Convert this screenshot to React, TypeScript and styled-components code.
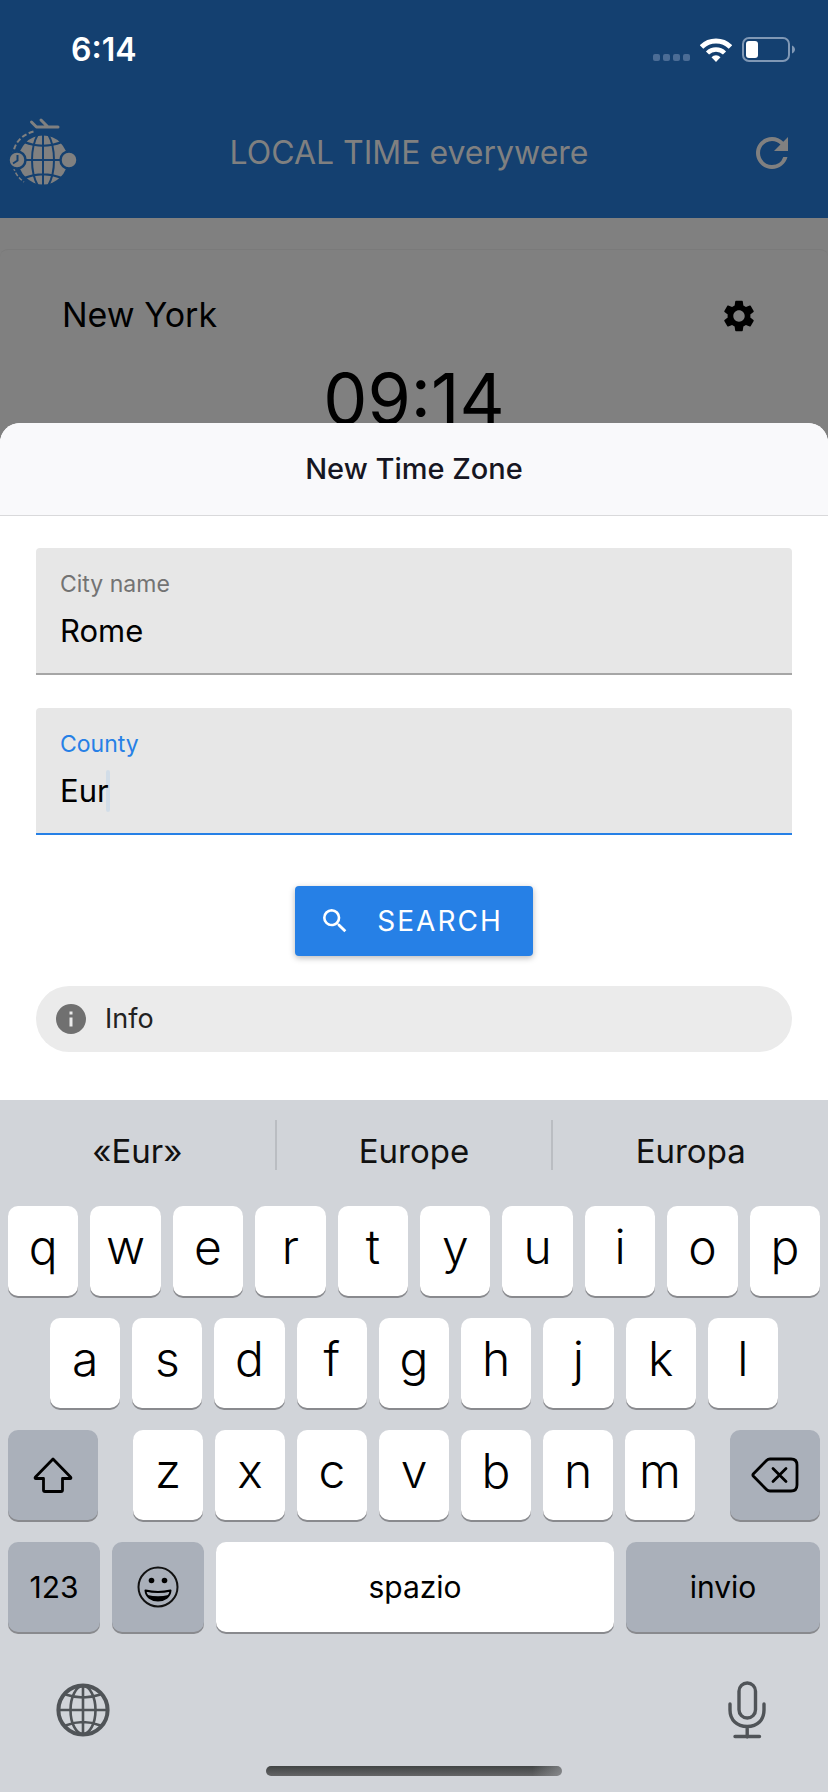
import React, { useState } from "react";
import styled, { createGlobalStyle } from "styled-components";
import { MdInfo, MdRefresh, MdSearch, MdSettings } from "react-icons/md";

const GlobalStyle = createGlobalStyle`
  *, *::before, *::after { box-sizing: border-box; }
  body {
    margin: 0;
    background: #d1d4d9;
    font-family: Inter, "Liberation Sans", sans-serif;
    color: #000;
  }
  button, input { font: inherit; color: inherit; }
  svg { display: block; flex: none; }
`;

const Screen = styled.div`
  min-height: 100vh;
  display: flex;
  flex-direction: column;
`;

const DimmedPage = styled.div`
  background: #808080;
`;

const Header = styled.header`
  background: #144070;
`;

const StatusBar = styled.div`
  height: 88px;
  padding: 12px 33px 0 71px;
  display: flex;
  align-items: center;
  justify-content: space-between;
  color: #fff;
`;

const Clock = styled.span`
  font-size: 32px;
  line-height: 40px;
  font-weight: 600;
`;

const StatusIcons = styled.div`
  display: flex;
  align-items: center;
  gap: 10px;
`;

const Toolbar = styled.div`
  height: 130px;
  padding: 0 32px 0 8px;
  display: flex;
  align-items: center;
  color: #808080;
`;

const AppTitle = styled.h1`
  flex: 1;
  margin: 0 8px 0 0;
  text-align: center;
  font-size: 32px;
  line-height: 40px;
  font-weight: 400;
`;

const IconButton = styled.button`
  display: grid;
  place-items: center;
  padding: 0;
  border: 0;
  background: none;
`;

const CityCard = styled.section`
  margin-top: 31px;
  padding: 45px 70px 0 62px;
  border-top: 1px solid #7a7a7a;
  border-radius: 8px 8px 0 0;
`;

const CityRow = styled.div`
  display: flex;
  align-items: flex-end;
  justify-content: space-between;
`;

const CityName = styled.h2`
  margin: 0;
  font-size: 34px;
  line-height: 40px;
  font-weight: 400;
`;

const CityTime = styled.p`
  margin: 24px 0 0 8px;
  text-align: center;
  font-size: 70px;
  line-height: 80px;
`;

const Sheet = styled.main`
  flex: 1;
  margin-top: -16px;
  border-radius: 20px 20px 0 0;
  background: #fff;
  overflow: hidden;
  position: relative;
`;

const SheetHeader = styled.div`
  padding: 26px 0;
  border-bottom: 1px solid #d9d9db;
  background: #f9f9fb;
`;

const SheetTitle = styled.h2`
  margin: 0;
  text-align: center;
  font-size: 29px;
  line-height: 40px;
  font-weight: 500;
  color: #161622;
`;

const Form = styled.form`
  padding: 32px 36px 48px;
  display: flex;
  flex-direction: column;
`;

const Field = styled.div<{ $active?: boolean }>`
  position: relative;
  margin-bottom: 33px;
  padding: 20px 24px 23px;
  border-bottom: 2px solid ${(p) => (p.$active ? "#2680e6" : "#a6a6a6")};
  border-radius: 4px 4px 0 0;
  background: #e7e7e7;
  display: flex;
  flex-direction: column;
  gap: 10px;
`;

const FieldLabel = styled.label<{ $active?: boolean }>`
  font-size: 23px;
  line-height: 32px;
  color: ${(p) => (p.$active ? "#2680e6" : "#737373")};
`;

const FieldInput = styled.input`
  position: relative;
  width: 100%;
  height: 40px;
  padding: 0;
  border: 0;
  outline: 0;
  background: none;
  font-size: 31px;
`;

const Caret = styled.span`
  position: absolute;
  left: 70px;
  top: 62px;
  width: 4px;
  height: 42px;
  border-radius: 2px;
  background: #d2dde8;
`;

const SearchButton = styled.button`
  align-self: center;
  height: 70px;
  margin: 18px 0 30px;
  padding: 0 30px 0 24px;
  display: flex;
  align-items: center;
  gap: 26px;
  border: 0;
  border-radius: 4px;
  background: #2680e6;
  color: #fff;
  font-size: 28px;
  line-height: 40px;
  letter-spacing: 2px;
  box-shadow: 0 2px 6px rgba(0, 0, 0, 0.28);
`;

const InfoPill = styled.div`
  height: 66px;
  padding: 0 17px;
  display: flex;
  align-items: center;
  gap: 16px;
  border-radius: 33px;
  background: #ebebeb;
  color: #222;
  font-size: 27px;
  line-height: 40px;

  svg { color: #707070; }
`;

const Keyboard = styled.section`
  background: #d1d4d9;
`;

const Suggestions = styled.div`
  height: 106px;
  padding: 20px 0 36px;
  display: flex;
`;

const Suggestion = styled.button`
  flex: 1 1 0;
  padding: 12px 0 0;
  border: 0;
  border-right: 2px solid #babdc2;
  background: none;
  font-size: 33px;
  line-height: 38px;
  color: #111;

  &:last-child { border-right: 0; }
`;

const KeyRows = styled.div`
  padding: 0 8px;
  display: flex;
  flex-direction: column;
  gap: 22px;
`;

const KeyRow = styled.div<{ $inset?: number; $gap?: number; $grow?: number }>`
  flex: ${(p) => p.$grow ?? 1} 1 0;
  padding: 0 ${(p) => p.$inset ?? 0}px;
  display: flex;
  gap: ${(p) => p.$gap ?? 12}px;
`;

const Key = styled.button<{ $grow?: number; $dark?: boolean; $word?: boolean }>`
  flex: ${(p) => p.$grow ?? 1} 1 0;
  min-width: 0;
  height: 90px;
  padding: ${(p) => (p.$word ? "0" : "0 0 8px")};
  display: grid;
  place-items: center;
  border: 0;
  border-radius: 10px;
  background: ${(p) => (p.$dark ? "#aab0ba" : "#fff")};
  box-shadow: 0 2px 0 #898a8e;
  font-size: ${(p) => (p.$word ? 30 : 48)}px;
  line-height: ${(p) => (p.$word ? 40 : 56)}px;
  font-weight: ${(p) => (p.$word ? 400 : 300)};
`;

const KeyboardFooter = styled.div`
  padding: 49px 62px 27px 56px;
  display: flex;
  align-items: center;
  justify-content: space-between;
  color: #505458;
`;

const HomeIndicator = styled.div`
  width: 296px;
  height: 10px;
  margin: 0 auto 17px;
  border-radius: 5px;
  background: linear-gradient(90deg, transparent 90%, rgba(160, 162, 166, 0.6)),
    linear-gradient(#414444, #646466);
`;

const Logo = () => (
  <svg width="70" height="74" viewBox="8 116 70 74" fill="none" aria-hidden="true">
    <g stroke="currentColor" strokeWidth="3" strokeLinecap="round" strokeLinejoin="round">
      <path d="M31.500 122l5 5H58M41 120l6.500 6.500" />
    </g>
    <path d="M33.500 131.500C22 135 14.500 142 13.200 154" stroke="currentColor" strokeWidth="2" strokeDasharray="5 2.500" />
    <path d="M13.500 167c1.500 6 5 11 10.500 15" stroke="currentColor" strokeWidth="1.500" strokeDasharray="4 2" />
    <circle cx="43" cy="160" r="24.500" fill="currentColor" />
    <g stroke="#144070" strokeWidth="2">
      <path d="M43 134v52M17 160h52M24 142q19 7.500 38 0M24 178q19-7.500 38 0" />
      <path d="M38 134c-8 14-8 38 0 52M48 134c8 14 8 38 0 52" />
    </g>
    <g fill="currentColor" stroke="#144070" strokeWidth="2.500">
      <circle cx="17" cy="160" r="8.500" />
      <circle cx="69" cy="160" r="8.500" />
    </g>
    <path d="M17.500 155v5.500l-4.500 3" stroke="#144070" strokeWidth="2" />
  </svg>
);

const SignalDots = () => (
  <svg width="37" height="24" viewBox="0 0 37 24" fill="#4b6c95" aria-hidden="true">
    {[0, 10, 20, 30].map((x) => (
      <rect key={x} x={x} y="16" width="7" height="7" rx="2" />
    ))}
  </svg>
);

const Wifi = () => (
  <svg width="32" height="24" viewBox="0 0 32 24" fill="none" stroke="#fff" aria-hidden="true">
    <path d="M1.500 9a20.500 20.500 0 0 1 29 0" strokeWidth="5" />
    <path d="M7.500 15a12.200 12.200 0 0 1 17 0" strokeWidth="4.500" />
    <path d="M11.500 19.200a6.400 6.400 0 0 1 9 0L16 24z" fill="#fff" stroke="none" />
  </svg>
);

const Battery = () => (
  <svg width="53" height="26" viewBox="0 0 53 26" fill="none" aria-hidden="true">
    <rect x="1" y="1" width="46" height="23" rx="6" stroke="#8098b5" strokeWidth="2" />
    <rect x="4" y="4" width="12" height="17" rx="3" fill="#fff" />
    <path d="M50 8.500c4 2 4 6 0 8z" fill="#8098b5" />
  </svg>
);

const ShiftIcon = () => (
  <svg width="40" height="36" viewBox="0 0 40 36" fill="none" stroke="currentColor" strokeWidth="2.800" strokeLinejoin="round" aria-hidden="true">
    <path d="M20 2L2.500 20c-.8.900-.4 1.500.5 1.500h7.500V33q0 1.500 1.500 1.500h16q1.500 0 1.500-1.500V21.500H37c.9 0 1.300-.6.500-1.500z" />
  </svg>
);

const BackspaceIcon = () => (
  <svg width="48" height="36" viewBox="0 0 48 36" fill="none" stroke="currentColor" strokeWidth="2.800" strokeLinecap="round" strokeLinejoin="round" aria-hidden="true">
    <path d="M19 2h21q6 0 6 6v20q0 6-6 6H19q-2 0-3.500-1.500L2.500 19.300q-1.200-1.300 0-2.600L15.500 3.500Q17 2 19 2z" />
    <path d="M22 11.500L35 24.500M35 11.500L22 24.500" />
  </svg>
);

const EmojiIcon = () => (
  <svg width="42" height="42" viewBox="0 0 42 42" fill="none" aria-hidden="true">
    <circle cx="21" cy="21" r="19.500" stroke="#111" strokeWidth="2" />
    <circle cx="14.500" cy="14.500" r="2.800" fill="#000" />
    <circle cx="27.500" cy="14.500" r="2.800" fill="#000" />
    <path d="M8.500 24.500q12.500 3 25 0C33 31 27.500 34.500 21 34.500S9 31 8.500 24.500z" stroke="#000" strokeWidth="2" strokeLinejoin="round" />
    <path d="M10.500 29q10.500 2.500 21 0-3.500 5.500-10.500 5.500T10.500 29z" fill="#000" />
  </svg>
);

const GlobeIcon = () => (
  <svg width="54" height="54" viewBox="0 0 54 54" fill="none" stroke="currentColor" strokeWidth="2.600" aria-hidden="true">
    <circle cx="27" cy="27" r="24.600" strokeWidth="4" />
    <path d="M27 3v48M3 27h48M9.500 11.500q17.500 6 35 0M9.500 42.500q17.500-7 35 0" />
    <ellipse cx="27" cy="27" rx="12.500" ry="24" />
  </svg>
);

const MicIcon = () => (
  <svg width="38" height="58" viewBox="0 0 38 58" fill="none" stroke="currentColor" strokeWidth="3.400" strokeLinecap="round" aria-hidden="true">
    <rect x="11" y="2" width="16.500" height="35" rx="8.250" />
    <path d="M2 23v6c0 10 7 16.500 17.200 16.500S36 39 36 29v-6M19.200 46v10M7 55.500h24.500" />
  </svg>
);

const LetterKeys = ({ letters }: { letters: string }) => (
  <>
    {letters.split("").map((letter) => (
      <Key key={letter} type="button">{letter}</Key>
    ))}
  </>
);

export default function App() {
  const [city, setCity] = useState("Rome");
  const [county, setCounty] = useState("Eur");

  return (
    <Screen>
      <GlobalStyle />
      <DimmedPage>
        <Header>
          <StatusBar>
            <Clock>6:14</Clock>
            <StatusIcons>
              <SignalDots />
              <Wifi />
              <Battery />
            </StatusIcons>
          </StatusBar>
          <Toolbar>
            <Logo />
            <AppTitle>LOCAL TIME everywere</AppTitle>
            <IconButton type="button" aria-label="Refresh"><MdRefresh size={48} /></IconButton>
          </Toolbar>
        </Header>
        <CityCard>
          <CityRow>
            <CityName>New York</CityName>
            <IconButton type="button" aria-label="Settings"><MdSettings size={38} /></IconButton>
          </CityRow>
          <CityTime>09:14</CityTime>
        </CityCard>
      </DimmedPage>

      <Sheet>
        <SheetHeader>
          <SheetTitle>New Time Zone</SheetTitle>
        </SheetHeader>
        <Form onSubmit={(e) => e.preventDefault()}>
          <Field>
            <FieldLabel htmlFor="city">City name</FieldLabel>
            <FieldInput id="city" type="text" value={city} onChange={(e) => setCity(e.target.value)} />
          </Field>
          <Field $active>
            <FieldLabel htmlFor="county" $active>County</FieldLabel>
            <Caret />
            <FieldInput id="county" type="text" value={county} onChange={(e) => setCounty(e.target.value)} />
          </Field>
          <SearchButton type="submit">
            <MdSearch size={32} />
            SEARCH
          </SearchButton>
          <InfoPill>
            <MdInfo size={36} />
            Info
          </InfoPill>
        </Form>
      </Sheet>

      <Keyboard aria-label="Keyboard">
        <Suggestions>
          <Suggestion type="button">«Eur»</Suggestion>
          <Suggestion type="button">Europe</Suggestion>
          <Suggestion type="button">Europa</Suggestion>
        </Suggestions>
        <KeyRows>
          <KeyRow><LetterKeys letters="qwertyuiop" /></KeyRow>
          <KeyRow $inset={42}><LetterKeys letters="asdfghjkl" /></KeyRow>
          <KeyRow $gap={35}>
            <Key type="button" $grow={90} $dark $word aria-label="Shift"><ShiftIcon /></Key>
            <KeyRow $grow={562}><LetterKeys letters="zxcvbnm" /></KeyRow>
            <Key type="button" $grow={90} $dark $word aria-label="Delete"><BackspaceIcon /></Key>
          </KeyRow>
          <KeyRow>
            <Key type="button" $grow={92} $dark $word>123</Key>
            <Key type="button" $grow={92} $dark $word aria-label="Emoji"><EmojiIcon /></Key>
            <Key type="button" $grow={398} $word>spazio</Key>
            <Key type="button" $grow={194} $dark $word>invio</Key>
          </KeyRow>
        </KeyRows>
        <KeyboardFooter>
          <IconButton type="button" aria-label="Change language"><GlobeIcon /></IconButton>
          <IconButton type="button" aria-label="Dictate"><MicIcon /></IconButton>
        </KeyboardFooter>
        <HomeIndicator />
      </Keyboard>
    </Screen>
  );
}
